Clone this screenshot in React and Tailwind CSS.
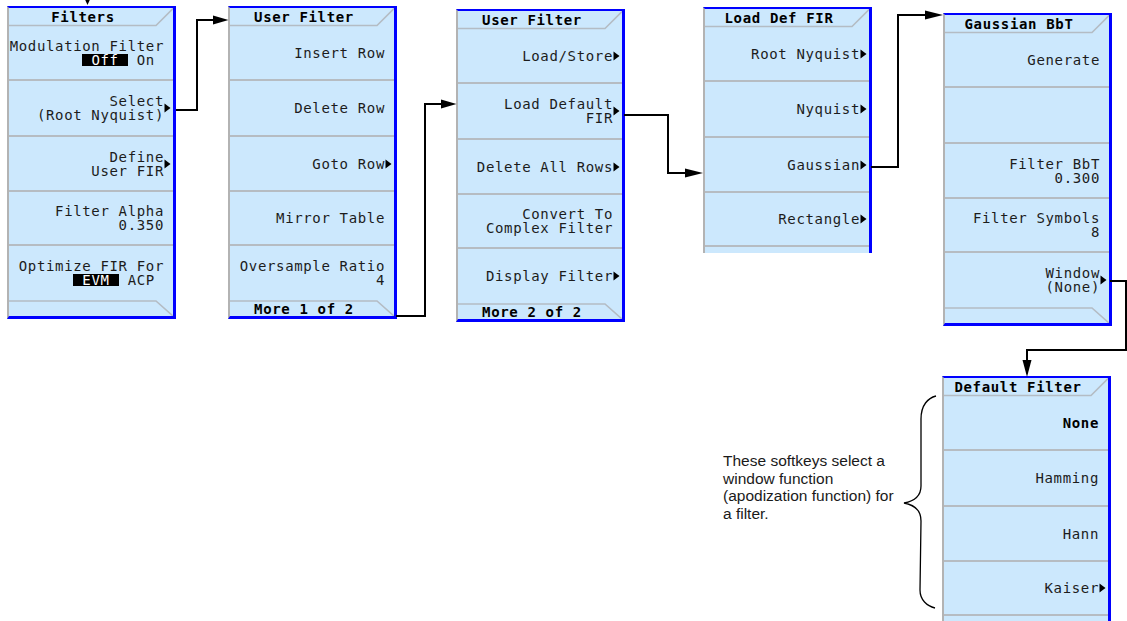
import React from "react";

const Tri = () => (
  <svg width="7" height="10" viewBox="0 0 7 10" className="shrink-0">
    <path d="M0.5 0.5L6.5 5L0.5 9.5Z" fill="#000" />
  </svg>
);

const Hl = ({ children }) => (
  <span className="inline-block bg-black text-white px-[9px] leading-[12px]">{children}</span>
);

function Title({ text }) {
  return (
    <div className="relative h-[19px] flex items-center">
      <svg className="absolute left-0 top-0" width="164" height="19" viewBox="0 0 164 19">
        <polyline points="0,17.5 147,17.5 164,0.5" fill="none" stroke="#b4bcc4" strokeWidth="1.6" />
      </svg>
      <div className="relative w-[148px] text-center font-bold text-black leading-[14px] pb-[2px]">{text}</div>
    </div>
  );
}

function Tab({ text }) {
  return (
    <div className="relative h-[16px] flex items-end">
      <svg className="absolute left-0 top-0" width="164" height="16" viewBox="0 0 164 16">
        <polyline points="0,1 147,1 164,16" fill="none" stroke="#b4bcc4" strokeWidth="1.6" />
      </svg>
      <div className="relative w-[148px] text-center font-bold text-black leading-[13px]">{text}</div>
    </div>
  );
}

function Row({ lines, arrow, h, last, bold }) {
  return (
    <div
      className={`${h} flex items-center justify-end ${arrow ? "pr-[2px]" : "pr-[9px]"} ${
        last ? "" : "border-b-2 border-b-[#b6bcc2]"
      }`}
    >
      <div className={`flex flex-col items-end leading-[14px] whitespace-pre ${bold ? "font-bold text-black" : "text-[#1c1c1c]"}`}>
        {lines.map((l, i) => (
          <div key={i}>{l}</div>
        ))}
      </div>
      {arrow ? <Tri /> : null}
    </div>
  );
}

const HS = ["h-[54px]", "h-[56px]", "h-[55px]", "h-[54px]", "h-[54px]"];

function Panel({ pos, title, rows, tab, cut }) {
  return (
    <div
      className={`absolute ${pos} w-[169px] bg-[#cce8fd] border-l-2 border-l-[#b3b3b3] border-r-[3px] border-r-[#0000ff] border-t-2 border-t-[#0000ff] ${
        cut ? "overflow-hidden" : "border-b-[3px] border-b-[#0000ff]"
      } font-['DejaVu_Sans_Mono',monospace] text-[14px] tracking-[0.65px]`}
    >
      <Title text={title} />
      {rows.map((r, i) => (
        <Row key={i} {...r} h={HS[i] || "h-[55px]"} last={!cut && i === rows.length - 1} />
      ))}
      {cut ? null : <Tab text={tab} />}
    </div>
  );
}

export default function App() {
  return (
    <div className="relative w-[1127px] h-[621px] overflow-hidden bg-white">
      <Panel
        pos="left-[7px] top-[6px]"
        title="Filters"
        rows={[
          { lines: ["Modulation Filter", <><Hl>Off</Hl> On </>] },
          { lines: ["Select", "(Root Nyquist)"], arrow: true },
          { lines: ["Define", "User FIR"], arrow: true },
          { lines: ["Filter Alpha", "0.350"] },
          { lines: ["Optimize FIR For", <><Hl>EVM</Hl> ACP </>] },
        ]}
        tab=""
      />
      <Panel
        pos="left-[228px] top-[6px]"
        title="User Filter"
        rows={[
          { lines: ["Insert Row"] },
          { lines: ["Delete Row"] },
          { lines: ["Goto Row"], arrow: true },
          { lines: ["Mirror Table"] },
          { lines: ["Oversample Ratio", "4"] },
        ]}
        tab="More 1 of 2"
      />
      <Panel
        pos="left-[456px] top-[9px]"
        title="User Filter"
        rows={[
          { lines: ["Load/Store"], arrow: true },
          { lines: ["Load Default", "FIR"], arrow: true },
          { lines: ["Delete All Rows"], arrow: true },
          { lines: ["Convert To", "Complex Filter"] },
          { lines: ["Display Filter"], arrow: true },
        ]}
        tab="More 2 of 2"
      />
      <div className="absolute left-[703px] top-[7px] h-[246px] overflow-hidden">
        <Panel
          pos="left-0 top-0"
          title="Load Def FIR"
          cut
          rows={[
            { lines: ["Root Nyquist"], arrow: true },
            { lines: ["Nyquist"], arrow: true },
            { lines: ["Gaussian"], arrow: true },
            { lines: ["Rectangle"], arrow: true },
            { lines: [""] },
          ]}
        />
        <div className="w-[169px] h-[246px]" />
      </div>
      <Panel
        pos="left-[943px] top-[13px]"
        title="Gaussian BbT"
        rows={[
          { lines: ["Generate"] },
          { lines: [""] },
          { lines: ["Filter BbT", "0.300"] },
          { lines: ["Filter Symbols", "8"] },
          { lines: ["Window", "(None)"], arrow: true },
        ]}
        tab=""
      />
      <Panel
        pos="left-[942px] top-[376px]"
        title="Default Filter"
        cut
        rows={[
          { lines: ["None"], bold: true },
          { lines: ["Hamming"] },
          { lines: ["Hann"] },
          { lines: ["Kaiser"], arrow: true },
          { lines: [""] },
        ]}
      />

      <div className="absolute left-[723px] top-[452px] text-[15.5px] leading-[17.5px] text-[#1a1a1a] font-['Liberation_Sans',Arial,sans-serif]">
        These softkeys select a
        <br />
        window function
        <br />
        (apodization function) for
        <br />
        a filter.
      </div>

      <svg className="absolute left-0 top-0 pointer-events-none" width="1127" height="621" viewBox="0 0 1127 621">
        <g fill="none" stroke="#000" strokeWidth="2" strokeLinejoin="miter">
          <path d="M176 110 H197 V20 H214" />
          <path d="M396 316 H425 V104 H442" />
          <path d="M624 115 H668 V173 H686" />
          <path d="M871 167 H898 V15 H926" />
          <path d="M1110 281 H1126 V350 H1027 V361" />
        </g>
        <g fill="#000">
          <path d="M83 -5 L87.5 5 L92 -5 Z" />
          <path d="M213 15.5 L228.5 20 L213 24.5 Z" />
          <path d="M441 99.5 L456.5 104 L441 108.5 Z" />
          <path d="M685 168.5 L703 173 L685 177.5 Z" />
          <path d="M925 10.5 L943 15 L925 19.5 Z" />
          <path d="M1022.5 360 L1027 377 L1031.5 360 Z" />
        </g>
        <path
          d="M936 396 C928 398 921 405 921 419 L921 486 C921 496 915 501 904 503 C915 505 921 511 921 521 L920 590 C920 600 927 606 935 608"
          fill="none"
          stroke="#000"
          strokeWidth="1.3"
        />
      </svg>
    </div>
  );
}
